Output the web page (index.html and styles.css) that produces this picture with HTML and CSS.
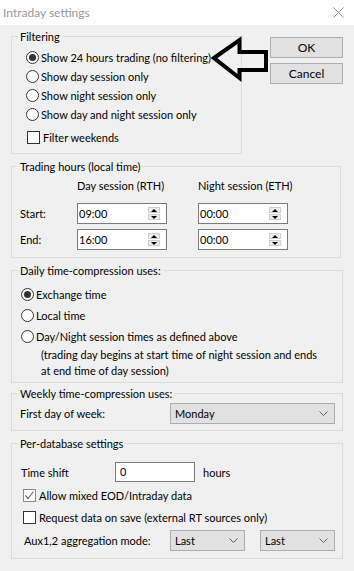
FILE: index.html
```html
<!DOCTYPE html>
<html>
<head>
    <title>Intraday settings</title>
    <link rel="stylesheet" href="styles.css">
</head>
<body>
    <div class="window">
        <div class="titlebar">
            <span class="title">Intraday settings</span>
            <svg class="close" width="11" height="11" viewBox="0 0 11 11">
                <path d="M0.5 0.5 L10.5 10.5 M10.5 0.5 L0.5 10.5" stroke="#8c8c8c" stroke-width="1" fill="none"/>
            </svg>
        </div>

        <div class="dialog">
            <div class="top-row">
                <div class="group group-filtering">
                    <div class="group-title">Filtering</div>
                    <div class="options">
                        <label class="radio-row"><span class="radio checked"></span>Show 24 hours trading (no filtering)</label>
                        <label class="radio-row"><span class="radio"></span>Show day session only</label>
                        <label class="radio-row"><span class="radio"></span>Show night session only</label>
                        <label class="radio-row"><span class="radio"></span>Show day and night session only</label>
                    </div>
                    <label class="check-row filter-weekends"><span class="check"></span>Filter weekends</label>
                </div>

                <div class="buttons">
                    <button class="btn">OK</button>
                    <button class="btn">Cancel</button>
                </div>

                <!-- hand-drawn annotation arrow -->
                <svg class="arrow" width="62" height="50" viewBox="0 0 62 50">
                    <polygon points="4,24 29.5,6 29.5,18 56,18 56,36 29.5,36 29.5,44" fill="none" stroke="#000" stroke-width="4" stroke-linejoin="miter"/>
                </svg>
            </div>

            <div class="group group-hours">
                <div class="group-title">Trading hours (local time)</div>
                <div class="hours-grid">
                    <span></span>
                    <span class="col-head">Day session (RTH)</span>
                    <span class="col-head">Night session (ETH)</span>

                    <span class="row-label">Start:</span>
                    <div class="spin"><span>09:00</span><span class="spin-btns"><span class="spin-btn up"></span><span class="spin-btn down"></span></span></div>
                    <div class="spin"><span>00:00</span><span class="spin-btns"><span class="spin-btn up"></span><span class="spin-btn down"></span></span></div>

                    <span class="row-label">End:</span>
                    <div class="spin"><span>16:00</span><span class="spin-btns"><span class="spin-btn up"></span><span class="spin-btn down"></span></span></div>
                    <div class="spin"><span>00:00</span><span class="spin-btns"><span class="spin-btn up"></span><span class="spin-btn down"></span></span></div>
                </div>
            </div>

            <div class="group group-daily">
                <div class="group-title">Daily time-compression uses:</div>
                <div class="daily-options">
                    <label class="radio-row tall"><span class="radio checked"></span>Exchange time</label>
                    <label class="radio-row tall"><span class="radio"></span>Local time</label>
                    <label class="radio-row tall"><span class="radio"></span>Day/Night session times as defined above</label>
                    <p class="note">(trading day begins at start time of night session and ends<br>at end time of day session)</p>
                </div>
            </div>

            <div class="group group-weekly">
                <div class="group-title">Weekly time-compression uses:</div>
                <div class="weekly-row">
                    <span class="weekly-label">First day of week:</span>
                    <div class="combo combo-wide"><span>Monday</span><svg width="9" height="5" viewBox="0 0 9 5"><path d="M0.5 0.5 L4.5 4.5 L8.5 0.5" stroke="#606060" fill="none"/></svg></div>
                </div>
            </div>

            <div class="group group-db">
                <div class="group-title">Per-database settings</div>
                <div class="shift-row">
                    <span class="shift-label">Time shift</span>
                    <div class="text-input">0</div>
                    <span class="hours-unit">hours</span>
                </div>
                <label class="check-row db-check"><span class="check checked"><svg width="11" height="11" viewBox="0 0 11 11"><path d="M1.5 5.5 L4 8.5 L9.5 1.5" stroke="#6e6e6e" stroke-width="1.2" fill="none"/></svg></span>Allow mixed EOD/Intraday data</label>
                <label class="check-row db-check"><span class="check"></span>Request data on save (external RT sources only)</label>
                <div class="aux-row">
                    <span class="aux-label">Aux1,2 aggregation mode:</span>
                    <div class="combo combo-small"><span>Last</span><svg width="9" height="5" viewBox="0 0 9 5"><path d="M0.5 0.5 L4.5 4.5 L8.5 0.5" stroke="#606060" fill="none"/></svg></div>
                    <div class="combo combo-small"><span>Last</span><svg width="9" height="5" viewBox="0 0 9 5"><path d="M0.5 0.5 L4.5 4.5 L8.5 0.5" stroke="#606060" fill="none"/></svg></div>
                </div>
            </div>
        </div>
    </div>
</body>
</html>
```

FILE: styles.css
```css
body {
    margin: 0;
    padding: 0;
    font-family: Lato, "Noto Sans", sans-serif;
    font-size: 11px;
    color: #000;
    background-color: #f0f0f0;
}

.window {
    width: 354px;
    height: 571px;
    background-color: #f0f0f0;
}

.titlebar {
    height: 25px;
    background-color: #fff;
    display: flex;
    align-items: center;
    justify-content: space-between;
    padding: 0 10px 0 3px;
    box-sizing: border-box;
}

.title {
    color: #999;
    font-size: 12px;
}

.dialog {
    padding: 0 11px;
}

.top-row {
    display: flex;
    align-items: flex-start;
    margin-top: 11px;
    position: relative;
}

.group {
    border: 1px solid #dcdcdc;
    box-sizing: border-box;
}

.group-title {
    width: fit-content;
    margin: -8px 0 0 6px;
    padding: 0 2px;
    line-height: 15px;
    background-color: #f0f0f0;
    white-space: nowrap;
}

.group-filtering {
    width: 231px;
    height: 118px;
}

.options {
    padding: 4px 0 0 14px;
}

.radio-row {
    display: flex;
    align-items: center;
    gap: 2px;
    height: 19px;
    white-space: nowrap;
}

.radio-row.tall {
    height: 21px;
}

.radio {
    width: 13px;
    height: 13px;
    border: 1px solid #333;
    border-radius: 50%;
    background-color: #fff;
    box-sizing: border-box;
    display: flex;
    align-items: center;
    justify-content: center;
    flex-shrink: 0;
}

.radio.checked::after {
    content: "";
    width: 7px;
    height: 7px;
    border-radius: 50%;
    background-color: #333;
}

.check-row {
    display: flex;
    align-items: center;
    gap: 3px;
    white-space: nowrap;
}

.check {
    width: 13px;
    height: 13px;
    border: 1px solid #333;
    background-color: #fff;
    box-sizing: border-box;
    display: flex;
    align-items: center;
    justify-content: center;
    flex-shrink: 0;
}

.check.checked {
    border-color: #8a8a8a;
}

.filter-weekends {
    height: 19px;
    margin-top: 4px;
    padding-left: 15px;
}

.buttons {
    display: flex;
    flex-direction: column;
    gap: 5px;
    margin: 1px 0 0 28px;
}

.btn {
    width: 73px;
    height: 21px;
    padding: 0;
    font: inherit;
    font-size: 12px;
    color: #000;
    background-color: #e1e1e1;
    border: 1px solid #adadad;
}

.arrow {
    position: absolute;
    left: 199px;
    top: -2px;
}

.group-hours {
    width: 330px;
    margin-top: 12px;
    height: 92px;
}

.hours-grid {
    display: grid;
    grid-template-columns: 57px 121px 90px;
    grid-template-rows: 19px 21px 21px;
    row-gap: 5px;
    padding-left: 8px;
    margin-top: 5px;
    align-items: center;
}

.col-head {
    align-self: start;
    white-space: nowrap;
}

.spin {
    width: 90px;
    height: 21px;
    display: flex;
    align-items: center;
    justify-content: space-between;
    border: 1px solid #7a7a7a;
    background-color: #fff;
    box-sizing: border-box;
    padding: 0 6px 0 1px;
}

.spin-btns {
    display: flex;
    flex-direction: column;
    gap: 1px;
}

.spin-btn {
    width: 12px;
    height: 6px;
    box-sizing: border-box;
    border: 1px solid #cfcfcf;
    background-color: #ececec;
    display: flex;
    align-items: center;
    justify-content: center;
}

.spin-btn::after {
    content: "";
    border-left: 3px solid transparent;
    border-right: 3px solid transparent;
}

.spin-btn.up::after {
    border-bottom: 3px solid #000;
}

.spin-btn.down::after {
    border-top: 3px solid #000;
}

.group-daily {
    margin-top: 12px;
    height: 113px;
}

.daily-options {
    padding: 6px 0 0 9px;
}

.note {
    margin: 0;
    padding-left: 20px;
    line-height: 16px;
    white-space: nowrap;
}

.group-weekly {
    margin-top: 10px;
    height: 38px;
}

.weekly-row {
    display: flex;
    align-items: center;
    margin-top: 2px;
    padding-left: 8px;
}

.weekly-label {
    width: 150px;
}

.combo {
    height: 21px;
    display: flex;
    align-items: center;
    justify-content: space-between;
    box-sizing: border-box;
    padding: 0 6px 0 4px;
    background-color: #e1e1e1;
    border: 1px solid #adadad;
}

.combo-wide {
    width: 165px;
}

.combo-small {
    width: 75px;
}

.group-db {
    margin-top: 12px;
    height: 116px;
}

.shift-row {
    display: flex;
    align-items: center;
    margin-top: 11px;
    padding-left: 9px;
}

.shift-label {
    width: 94px;
}

.text-input {
    width: 80px;
    height: 20px;
    box-sizing: border-box;
    border: 1px solid #7a7a7a;
    background-color: #fff;
    padding-left: 4px;
    line-height: 18px;
}

.hours-unit {
    margin-left: 8px;
}

.db-check {
    height: 22px;
    padding-left: 11px;
}

.db-check:first-of-type {
    margin-top: 2px;
}

.aux-row {
    display: flex;
    align-items: center;
    gap: 15px;
    margin-top: 2px;
    padding-left: 12px;
}

.aux-label {
    width: 131px;
    white-space: nowrap;
}
```
